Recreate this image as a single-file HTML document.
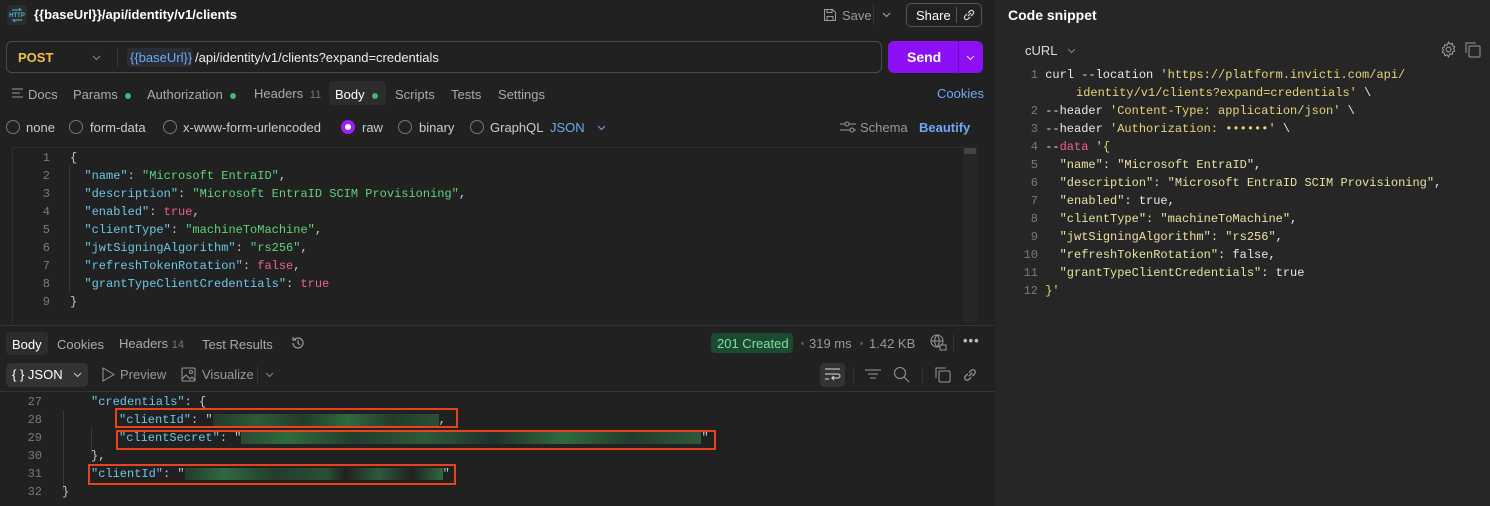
<!DOCTYPE html>
<html><head><meta charset="utf-8"><style>
*{margin:0;padding:0;box-sizing:border-box}
body{width:1490px;height:506px;background:#212121;font-family:"Liberation Sans",sans-serif;color:#c8c8c8;position:relative;overflow:hidden;font-size:13px}
.a{position:absolute;white-space:nowrap}
.m{font-family:"Liberation Mono",monospace;font-size:12px}
.k{color:#6cc6e6}.s{color:#5fd37a}.b{color:#ef5f8f}
.rk{color:#e8e2a0}.rs{color:#e5d57a}
.ln{color:#7a7a7a;text-align:right;width:30px}
.dot{display:inline-block;width:6px;height:6px;border-radius:3px;background:#3fb96a;margin-left:7px;vertical-align:middle}
.rad{position:absolute;width:14px;height:14px;border:1.5px solid #777;border-radius:50%}
.red{position:absolute;border:2px solid #e8431f}
.g{display:inline-block;height:12px;vertical-align:middle}
</style></head><body>
<!-- top bar -->
<svg class="a" style="left:7px;top:5px" width="20" height="20" viewBox="0 0 20 20"><rect width="20" height="20" rx="4" fill="#2c2c2c"/><text x="10" y="12" font-size="6" fill="#4fb6d6" text-anchor="middle" font-family="Liberation Sans" font-weight="bold">HTTP</text><path d="M5 5h9l-2-2M15 15H6l2 2" stroke="#4fb6d6" fill="none" stroke-width="1"/></svg>
<div class="a" style="left:34px;top:7px;color:#fff;font-weight:bold;font-size:13px">{{baseUrl}}/api/identity/v1/clients</div>
<svg class="a" style="left:823px;top:8px" width="14" height="14" viewBox="0 0 14 14"><path d="M1.5 1.5h8l3 3v8h-11z M4 1.5v3h5v-3 M4 12.5v-4h6v4" stroke="#999" fill="none"/></svg>
<div class="a" style="left:842px;top:8px;color:#999">Save</div>
<div class="a" style="left:873px;top:3px;width:1px;height:22px;background:#333"></div>
<svg class="a" style="left:882px;top:12px" width="9" height="6"><path d="M1 1l3.5 3.5L8 1" stroke="#aaa" fill="none"/></svg>
<div class="a" style="left:906px;top:3px;width:76px;height:24px;border:1px solid #555;border-radius:5px"></div>
<div class="a" style="left:916px;top:8px;color:#fff">Share</div>
<div class="a" style="left:956px;top:7px;width:1px;height:16px;background:#555"></div>
<svg class="a" style="left:962px;top:8px" width="14" height="14" viewBox="0 0 14 14"><path d="M6 8l3-3M5 6L3 8a2 2 0 003 3l2-2M9 8l2-2a2 2 0 00-3-3L6 5" stroke="#ddd" fill="none" stroke-width="1.2"/></svg>
<!-- url bar -->
<div class="a" style="left:6px;top:41px;width:876px;height:32px;border:1px solid #4a4a4a;border-radius:6px"></div>
<div class="a" style="left:18px;top:50px;color:#f0c24b;font-weight:bold">POST</div>
<svg class="a" style="left:92px;top:55px" width="9" height="6"><path d="M1 1l3.5 3.5L8 1" stroke="#888" fill="none"/></svg>
<div class="a" style="left:117px;top:48px;width:1px;height:18px;background:#3a3a3a"></div>
<div class="a" style="left:127px;top:48px;width:65px;height:19px;background:#2a2d33;border-radius:3px"></div>
<div class="a" style="left:130px;top:50px;color:#6fa8f6">{{baseUrl}}</div>
<div class="a" style="left:195px;top:50px;color:#eee">/api/identity/v1/clients?expand=credentials</div>
<div class="a" style="left:888px;top:41px;width:95px;height:32px;background:#8d0ff5;border-radius:6px"></div>
<div class="a" style="left:958px;top:41px;width:1px;height:32px;background:#6a0bbd"></div>
<div class="a" style="left:907px;top:49px;color:#fff;font-weight:bold;font-size:14px">Send</div>
<svg class="a" style="left:966px;top:55px" width="9" height="6"><path d="M1 1l3.5 3.5L8 1" stroke="#ddd" fill="none"/></svg>
<!-- tabs -->
<svg class="a" style="left:12px;top:88px" width="12" height="10"><path d="M0 1h11M0 5h8M0 9h11" stroke="#999"/></svg>
<div class="a" style="left:28px;top:87px;color:#aaa">Docs</div>
<div class="a" style="left:73px;top:87px;color:#aaa">Params<span class="dot"></span></div>
<div class="a" style="left:147px;top:87px;color:#aaa">Authorization<span class="dot"></span></div>
<div class="a" style="left:254px;top:86px;color:#aaa">Headers <span style="color:#777;font-size:11px">&nbsp;11</span></div>
<div class="a" style="left:329px;top:81px;width:57px;height:24px;background:#2c2c2c;border-radius:4px"></div>
<div class="a" style="left:335px;top:87px;color:#fff">Body<span class="dot"></span></div>
<div class="a" style="left:395px;top:87px;color:#aaa">Scripts</div>
<div class="a" style="left:451px;top:87px;color:#aaa">Tests</div>
<div class="a" style="left:498px;top:87px;color:#aaa">Settings</div>
<div class="a" style="left:937px;top:86px;color:#6fa8f6">Cookies</div>
<!-- radios -->
<div class="rad" style="left:6px;top:120px"></div><div class="a" style="left:26px;top:120px;color:#ccc">none</div>
<div class="rad" style="left:69px;top:120px"></div><div class="a" style="left:90px;top:120px;color:#ccc">form-data</div>
<div class="rad" style="left:163px;top:120px"></div><div class="a" style="left:183px;top:120px;color:#ccc">x-www-form-urlencoded</div>
<div class="a" style="left:341px;top:120px;width:14px;height:14px;border-radius:50%;background:#9b20f5"></div><div class="a" style="left:345px;top:124px;width:6px;height:6px;border-radius:50%;background:#fff"></div>
<div class="a" style="left:362px;top:120px;color:#ccc">raw</div>
<div class="rad" style="left:398px;top:120px"></div><div class="a" style="left:419px;top:120px;color:#ccc">binary</div>
<div class="rad" style="left:470px;top:120px"></div><div class="a" style="left:490px;top:120px;color:#ccc">GraphQL</div>
<div class="a" style="left:550px;top:120px;color:#6fa8f6">JSON</div>
<svg class="a" style="left:597px;top:125px" width="9" height="6"><path d="M1 1l3.5 3.5L8 1" stroke="#6fa8f6" fill="none"/></svg>
<svg class="a" style="left:840px;top:120px" width="16" height="14"><path d="M0 4h5M9 4h7M0 10h10M14 10h2" stroke="#999"/><circle cx="7" cy="4" r="2" stroke="#999" fill="none"/><circle cx="12" cy="10" r="2" stroke="#999" fill="none"/></svg>
<div class="a" style="left:860px;top:120px;color:#999">Schema</div>
<div class="a" style="left:919px;top:120px;color:#6fa8f6;font-weight:bold">Beautify</div>
<!-- editor -->
<div class="a" style="left:12px;top:147px;width:966px;height:1px;background:#2e2e2e"></div>
<div class="a" style="left:12px;top:147px;width:1px;height:176px;background:#2e2e2e"></div>
<div class="a" style="left:963px;top:147px;width:14px;height:176px;background:#262626"></div>
<div class="a" style="left:964px;top:148px;width:12px;height:6px;background:#444"></div>
<div class="a" style="left:69px;top:166px;width:1px;height:126px;background:#3a3a3a"></div>
<div class="a m" style="left:20px;top:149px;line-height:18px">
<div><span class="ln" style="display:inline-block">1</span><span style="display:inline-block;width:20px"></span>{</div>
<div><span class="ln" style="display:inline-block">2</span><span style="display:inline-block;width:20px"></span>&nbsp;&nbsp;<span class="k">"name"</span>: <span class="s">"Microsoft EntraID"</span>,</div>
<div><span class="ln" style="display:inline-block">3</span><span style="display:inline-block;width:20px"></span>&nbsp;&nbsp;<span class="k">"description"</span>: <span class="s">"Microsoft EntraID SCIM Provisioning"</span>,</div>
<div><span class="ln" style="display:inline-block">4</span><span style="display:inline-block;width:20px"></span>&nbsp;&nbsp;<span class="k">"enabled"</span>: <span class="b">true</span>,</div>
<div><span class="ln" style="display:inline-block">5</span><span style="display:inline-block;width:20px"></span>&nbsp;&nbsp;<span class="k">"clientType"</span>: <span class="s">"machineToMachine"</span>,</div>
<div><span class="ln" style="display:inline-block">6</span><span style="display:inline-block;width:20px"></span>&nbsp;&nbsp;<span class="k">"jwtSigningAlgorithm"</span>: <span class="s">"rs256"</span>,</div>
<div><span class="ln" style="display:inline-block">7</span><span style="display:inline-block;width:20px"></span>&nbsp;&nbsp;<span class="k">"refreshTokenRotation"</span>: <span class="b">false</span>,</div>
<div><span class="ln" style="display:inline-block">8</span><span style="display:inline-block;width:20px"></span>&nbsp;&nbsp;<span class="k">"grantTypeClientCredentials"</span>: <span class="b">true</span></div>
<div><span class="ln" style="display:inline-block">9</span><span style="display:inline-block;width:20px"></span>}</div>
</div>
<div class="a" style="left:0;top:325px;width:995px;height:1px;background:#333"></div>
<!-- response tabs -->
<div class="a" style="left:6px;top:332px;width:42px;height:23px;background:#2c2c2c;border-radius:4px"></div>
<div class="a" style="left:12px;top:337px;color:#fff">Body</div>
<div class="a" style="left:57px;top:337px;color:#aaa">Cookies</div>
<div class="a" style="left:119px;top:336px;color:#aaa">Headers <span style="color:#777;font-size:11px">14</span></div>
<div class="a" style="left:202px;top:337px;color:#aaa">Test Results</div>
<svg class="a" style="left:290px;top:335px" width="16" height="16" viewBox="0 0 16 16"><path d="M3 8a5 5 0 105-5 5 5 0 00-4 2M3 2v3h3M8 5v3l2 2" stroke="#999" fill="none" stroke-width="1.2"/></svg>
<div class="a" style="left:711px;top:333px;width:82px;height:20px;background:#1b4a30;border-radius:4px"></div>
<div class="a" style="left:717px;top:336px;color:#7ee0a4">201 Created</div>
<div class="a" style="left:801px;top:342px;width:3px;height:3px;border-radius:2px;background:#555"></div>
<div class="a" style="left:809px;top:336px;color:#999">319 ms</div>
<div class="a" style="left:860px;top:342px;width:3px;height:3px;border-radius:2px;background:#555"></div>
<div class="a" style="left:869px;top:336px;color:#999">1.42 KB</div>
<svg class="a" style="left:930px;top:334px" width="17" height="17" viewBox="0 0 17 17"><circle cx="7" cy="7" r="6" stroke="#999" fill="none"/><path d="M1 7h12M7 1c-3 3-3 9 0 12M7 1c3 3 3 9 0 12" stroke="#999" fill="none"/><rect x="10" y="11" width="6" height="5" fill="#212121" stroke="#999"/></svg>
<div class="a" style="left:953px;top:334px;width:1px;height:18px;background:#333"></div>
<div class="a" style="left:963px;top:333px;color:#bbb;font-weight:bold;letter-spacing:1px">•••</div>
<div class="a" style="left:6px;top:363px;width:82px;height:24px;background:#333;border-radius:5px"></div>
<div class="a" style="left:12px;top:367px;color:#fff">{ } JSON</div>
<svg class="a" style="left:73px;top:372px" width="9" height="6"><path d="M1 1l3.5 3.5L8 1" stroke="#ccc" fill="none"/></svg>
<svg class="a" style="left:101px;top:367px" width="14" height="15"><path d="M2 1l11 6.5L2 14z" stroke="#999" fill="none"/></svg>
<div class="a" style="left:120px;top:367px;color:#999">Preview</div>
<svg class="a" style="left:181px;top:367px" width="15" height="15"><rect x="1" y="1" width="13" height="13" rx="1" stroke="#999" fill="none"/><path d="M1 12l4-4 4 4 2-2 3 3" stroke="#999" fill="none"/><circle cx="10" cy="5" r="1.5" stroke="#999" fill="none"/></svg>
<div class="a" style="left:202px;top:367px;color:#999">Visualize</div>
<div class="a" style="left:257px;top:366px;width:1px;height:18px;background:#333"></div>
<svg class="a" style="left:265px;top:372px" width="9" height="6"><path d="M1 1l3.5 3.5L8 1" stroke="#888" fill="none"/></svg>
<div class="a" style="left:820px;top:363px;width:25px;height:24px;background:#333;border-radius:4px"></div>
<svg class="a" style="left:824px;top:367px" width="17" height="15"><path d="M1 2h15M1 7h13a2 2 0 010 4H8l2-2M8 11l2 2M1 12h4" stroke="#ddd" fill="none"/></svg>
<div class="a" style="left:853px;top:366px;width:1px;height:18px;background:#333"></div>
<svg class="a" style="left:865px;top:368px" width="16" height="13"><path d="M0 2h16M3 6h10M5 10h6" stroke="#999"/></svg>
<svg class="a" style="left:893px;top:366px" width="17" height="17"><circle cx="7" cy="7" r="5.5" stroke="#999" fill="none"/><path d="M11 11l5 5" stroke="#999"/></svg>
<div class="a" style="left:922px;top:366px;width:1px;height:18px;background:#333"></div>
<svg class="a" style="left:935px;top:367px" width="16" height="16"><rect x="4" y="4" width="11" height="11" rx="1" stroke="#999" fill="none"/><path d="M11 1H1v10" stroke="#999" fill="none"/></svg>
<svg class="a" style="left:962px;top:367px" width="16" height="16" viewBox="0 0 14 14"><path d="M6 8l3-3M5 6L3 8a2 2 0 003 3l2-2M9 8l2-2a2 2 0 00-3-3L6 5" stroke="#999" fill="none" stroke-width="1.1"/></svg>
<div class="a" style="left:0;top:391px;width:995px;height:1px;background:#333"></div>
<!-- response code -->
<div class="a" style="left:63px;top:410px;width:1px;height:80px;background:#3a3a3a"></div>
<div class="a" style="left:91px;top:428px;width:1px;height:26px;background:#3a3a3a"></div>
<div class="a m" style="left:12px;top:393px;line-height:18px">
<div><span class="ln" style="display:inline-block">27</span><span style="display:inline-block;width:49px"></span><span class="k">"credentials"</span>: {</div>
<div><span class="ln" style="display:inline-block">28</span><span style="display:inline-block;width:77px"></span><span class="k">"clientId"</span>: "<span class="g" style="width:226px;background:linear-gradient(90deg,#243b2c,#2d5a3a 20%,#243b2c 40%,#2f6a3f 60%,#243b2c 80%,#2a5036)"></span>,</div>
<div><span class="ln" style="display:inline-block">29</span><span style="display:inline-block;width:77px"></span><span class="k">"clientSecret"</span>: "<span class="g" style="width:460px;background:linear-gradient(90deg,#2a4a33,#2f6a3f 10%,#243b2c 25%,#2d5a3a 40%,#22302a 55%,#2f6a3f 70%,#243b2c 85%,#2d5a3a)"></span>"</div>
<div><span class="ln" style="display:inline-block">30</span><span style="display:inline-block;width:49px"></span>},</div>
<div><span class="ln" style="display:inline-block">31</span><span style="display:inline-block;width:49px"></span><span class="k">"clientId"</span>: "<span class="g" style="width:258px;background:linear-gradient(90deg,#243b2c,#2f6a3f 15%,#243b2c 35%,#2a5036 55%,#212121 62%,#2d5a3a 75%,#212121 88%,#2f6a3f)"></span>"</div>
<div><span class="ln" style="display:inline-block">32</span><span style="display:inline-block;width:20px"></span>}</div>
</div>
<div class="red" style="left:115px;top:408px;width:343px;height:20px"></div>
<div class="red" style="left:116px;top:430px;width:600px;height:20px"></div>
<div class="red" style="left:88px;top:464px;width:368px;height:21px"></div>
<!-- right panel -->
<div class="a" style="left:995px;top:0;width:495px;height:506px;background:#262626"></div>
<div class="a" style="left:1008px;top:7px;color:#fff;font-weight:bold;font-size:14px">Code snippet</div>
<div class="a" style="left:1025px;top:43px;color:#ddd">cURL</div>
<svg class="a" style="left:1067px;top:48px" width="9" height="6"><path d="M1 1l3.5 3.5L8 1" stroke="#888" fill="none"/></svg>
<svg class="a" style="left:1440px;top:41px" width="17" height="17" viewBox="0 0 16 16"><circle cx="8" cy="8" r="2.3" stroke="#999" fill="none"/><path d="M8 1l1.3 1.8 2.2-.6.3 2.2 2 1-1 2 1 2-2 1-.3 2.2-2.2-.6L8 15l-1.3-1.8-2.2.6-.3-2.2-2-1 1-2-1-2 2-1 .3-2.2 2.2.6z" stroke="#999" fill="none"/></svg>
<svg class="a" style="left:1465px;top:42px" width="16" height="16"><rect x="4" y="4" width="11" height="11" rx="1" stroke="#999" fill="none"/><path d="M11 1H1v10" stroke="#999" fill="none"/></svg>
<div class="a m" style="left:1011px;top:66px;line-height:18px;color:#e8e8e8">
<div><span class="ln" style="display:inline-block;width:27px">1</span>&nbsp;curl --location <span class="rs">'https://platform.invicti.com/api/</span></div>
<div><span style="display:inline-block;width:65px"></span><span class="rs">identity/v1/clients?expand=credentials'</span> \</div>
<div><span class="ln" style="display:inline-block;width:27px">2</span>&nbsp;--header <span class="rs">'Content-Type: application/json'</span> \</div>
<div><span class="ln" style="display:inline-block;width:27px">3</span>&nbsp;--header <span class="rs">'Authorization: ••••••'</span> \</div>
<div><span class="ln" style="display:inline-block;width:27px">4</span>&nbsp;--<span class="b">data</span> <span class="rs">'{</span></div>
<div><span class="ln" style="display:inline-block;width:27px">5</span>&nbsp;&nbsp;&nbsp;<span class="rk">"name": "Microsoft EntraID"</span>,</div>
<div><span class="ln" style="display:inline-block;width:27px">6</span>&nbsp;&nbsp;&nbsp;<span class="rk">"description": "Microsoft EntraID SCIM Provisioning"</span>,</div>
<div><span class="ln" style="display:inline-block;width:27px">7</span>&nbsp;&nbsp;&nbsp;<span class="rk">"enabled"</span>: true,</div>
<div><span class="ln" style="display:inline-block;width:27px">8</span>&nbsp;&nbsp;&nbsp;<span class="rk">"clientType": "machineToMachine"</span>,</div>
<div><span class="ln" style="display:inline-block;width:27px">9</span>&nbsp;&nbsp;&nbsp;<span class="rk">"jwtSigningAlgorithm": "rs256"</span>,</div>
<div><span class="ln" style="display:inline-block;width:27px">10</span>&nbsp;&nbsp;&nbsp;<span class="rk">"refreshTokenRotation"</span>: false,</div>
<div><span class="ln" style="display:inline-block;width:27px">11</span>&nbsp;&nbsp;&nbsp;<span class="rk">"grantTypeClientCredentials"</span>: true</div>
<div><span class="ln" style="display:inline-block;width:27px">12</span>&nbsp;<span class="rs">}'</span></div>
</div>
</body></html>
